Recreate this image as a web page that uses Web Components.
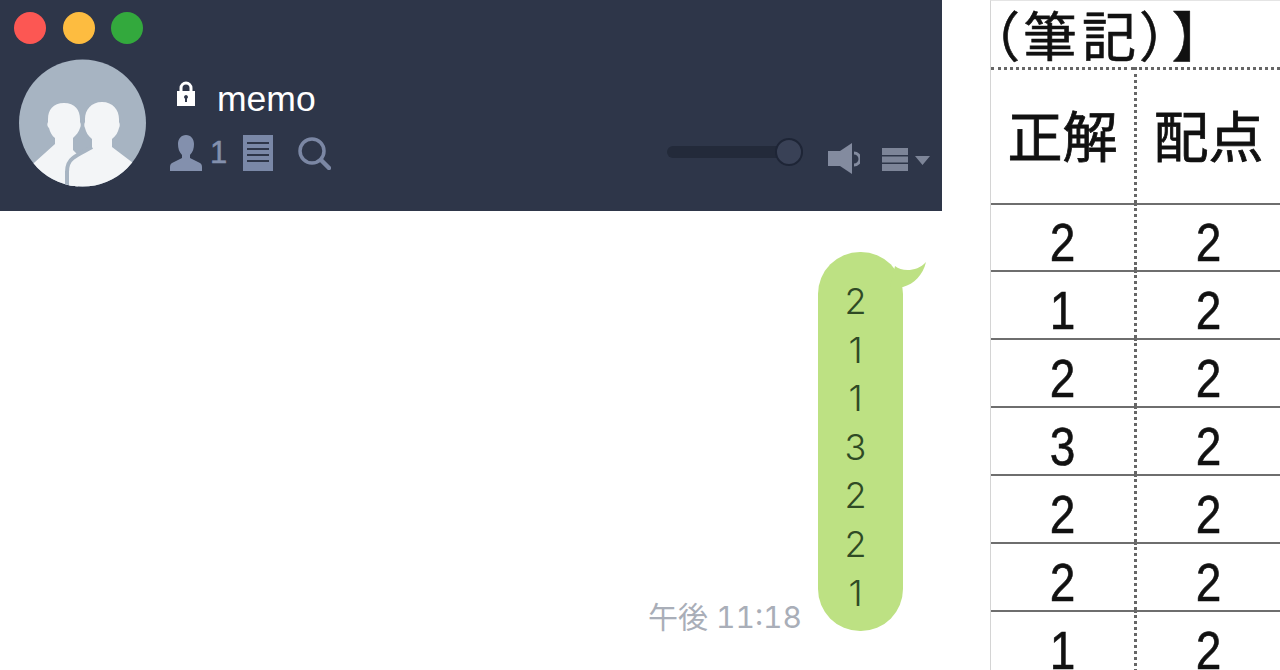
<!DOCTYPE html>
<html lang="ja">
<head>
<meta charset="utf-8">
<title>memo</title>
<style>
  html, body { margin: 0; height: 100%; background: #fff; overflow: hidden; }
  body { font-family: "Liberation Sans", "Noto Sans CJK JP", sans-serif; }
  #page { display: grid; grid-template-columns: 942px 290px; column-gap: 48px; height: 670px; }
  #chat { display: flex; flex-direction: column; height: 670px; }
</style>
</head>
<body>
<div id="page">
  <div id="chat">
    <chat-header title="memo" count="1"></chat-header>
    <chat-log>
      <chat-bubble time="午後 11:18">2<br>1<br>1<br>3<br>2<br>2<br>1</chat-bubble>
    </chat-log>
  </div>
  <answer-sheet></answer-sheet>
</div>

<script>
class WindowLights extends HTMLElement {
	constructor() {
		super()
		this.attachShadow({ mode: 'open' })
		this.shadowRoot.innerHTML = /* html */ `
      <style>
        :host { display: flex; gap: 16.500px; }
        i { display: block; width: 32px; height: 32px; border-radius: 50%; }
      </style>
      <i style="background:#fc5753"></i>
      <i style="background:#fdbc40"></i>
      <i style="background:#33a93d"></i>
    `
	}
}

class ChatHeader extends HTMLElement {
	constructor() {
		super()
		this.attachShadow({ mode: 'open' })
	}

	connectedCallback() {
		this.shadowRoot.innerHTML = /* html */ `
      <style>
        :host {
          display: block;
          flex: none;
          box-sizing: border-box;
          height: 211px;
          padding: 12px 12px 0 14px;
          background: #2e3649;
          font-family: "Liberation Sans", sans-serif;
        }
        .row { display: flex; margin: 15px 0 0 5px; }
        .avatar { display: block; flex: none; width: 127px; height: 128px; }
        .info { flex: 1; margin-left: 24px; padding-top: 22px; }
        .title { display: flex; align-items: center; height: 36px; color: #fff; font-size: 35.500px; }
        .title svg { margin: -12px 21px 0 6px; }
        .tools { display: flex; align-items: center; margin-top: 18px; height: 36px; color: #8390ad; font-size: 31px; }
        .count { margin: 0 16px 0 8px; -webkit-text-stroke: 0.500px #8390ad; }
        .search { margin-left: 25px; }
        .controls { display: flex; align-items: center; align-self: flex-end; margin-bottom: 12px; }
        .slider { position: relative; width: 136px; height: 12px; margin: 0 25px 14px 0; border-radius: 6px; background: #232a3a; }
        .slider i {
          position: absolute; right: 0; top: -8px;
          box-sizing: border-box; width: 28px; height: 28px;
          border: 2px solid #1e2536; border-radius: 50%; background: #394156;
        }
        .menu { margin-left: 22px; }
      </style>
      <window-lights></window-lights>
      <div class="row">
        <svg class="avatar" viewBox="19 59 127 128">
          <defs><clipPath id="c"><circle cx="82.5" cy="123" r="63.5"/></clipPath></defs>
          <circle cx="82.5" cy="123" r="63.5" fill="#a7b4c2"/>
          <g clip-path="url(#c)" fill="#f3f5f7">
            <path d="M64 103C53 103 48 110 48 119V122C47 124 47 126 49 128 50 132 52 136 55 138V144L25 171V192H78V155L73 150V138C76 135 79 132 80 128 81 126 81 124 80 122V119C80 110 75 103 64 103Z"/>
            <path d="M102 102C91 102 85 110 85 119V122C84 124 84 126 85 128 86 132 88 136 92 139V147C85 151 78 154 73 158 69 161 67 166 67 172V192H145V172L112 147V139C116 136 118 132 119 128 120 126 120 124 119 122V119C119 110 113 102 102 102Z"/>
            <path d="M92 147C85 151 78 154 73 158 69 161 67 166 67 172V192" fill="none" stroke="#a7b4c2" stroke-width="4"/>
          </g>
        </svg>
        <div class="info">
          <div class="title">
            <svg width="20" height="25" viewBox="0 0 20 25"><path d="M5 11V7a5 5 0 0 1 10 0v4" fill="none" stroke="#fff" stroke-width="3"/><path fill="#fff" fill-rule="evenodd" d="M1 10h18v15H1zM10 14a2 2 0 0 0-1 3.700V21h2v-3.300A2 2 0 0 0 10 14z"/></svg>
            <span>${this.getAttribute('title')}</span>
          </div>
          <div class="tools">
            <svg width="32" height="36" viewBox="0 0 32 36" fill="#8390ad"><path d="M16 0c-5 0-8 4-8 9 0 4 1 8 4 11v3L2 28c-2 1-2 3-2 5v3h32v-3c0-2 0-4-2-5l-10-5v-3c3-3 4-7 4-11 0-5-3-9-8-9z"/></svg>
            <span class="count">${this.getAttribute('count')}</span>
            <svg width="30" height="36" viewBox="0 0 30 36"><rect width="30" height="36" fill="#7a88a7"/><path d="M4 8h22M4 14h22M4 20h22M4 26h22" stroke="#2e3649" stroke-width="2"/></svg>
            <svg class="search" width="33" height="33" viewBox="0 0 33 33" fill="none" stroke="#7b87a4" stroke-width="3.500"><circle cx="14" cy="14" r="12"/><path d="M23 23l8 8" stroke-linecap="round" stroke-width="4.500"/></svg>
          </div>
        </div>
        <div class="controls">
          <div class="slider"><i></i></div>
          <svg width="32" height="32" viewBox="0 0 32 32" fill="#838b9f"><path d="M0 8h12L24 0v31L12 23H0z"/><path d="M26 10a6 6 0 0 1 0 12" fill="none" stroke="#838b9f" stroke-width="3"/></svg>
          <svg class="menu" width="48" height="23" viewBox="0 0 48 23" fill="#7d8598"><path d="M0 0h26v7H0zM0 8.500h26v6H0zM0 16h26v7H0zM33 8h15l-7.500 9z"/></svg>
        </div>
      </div>
    `
	}
}

class ChatLog extends HTMLElement {
	constructor() {
		super()
		this.attachShadow({ mode: 'open' })
		this.shadowRoot.innerHTML = /* html */ `
      <style>
        :host {
          display: flex;
          flex: 1;
          justify-content: flex-end;
          align-items: flex-start;
          box-sizing: border-box;
          padding: 41px 39px 0 0;
        }
      </style>
      <slot></slot>
    `
	}
}

class ChatBubble extends HTMLElement {
	constructor() {
		super()
		this.attachShadow({ mode: 'open' })
	}

	connectedCallback() {
		this.shadowRoot.innerHTML = /* html */ `
      <style>
        :host { display: flex; align-items: flex-end; }
        .time {
          margin: 0 16px -8px 0;
          color: #a9aeb8;
          font: 400 30px/44px Inter, "Noto Sans CJK JP", sans-serif;
          font-variant-numeric: tabular-nums;
          white-space: nowrap;
        }
        .bubble {
          position: relative;
          box-sizing: border-box;
          width: 85px;
          height: 379px;
          padding: 25px 10px 0 0;
          border-radius: 42px;
          background: #bde183;
          color: #2f4a25;
          font: 300 36px/48.600px Inter, sans-serif;
          text-align: center;
        }
        svg { position: absolute; left: 72px; top: -1px; }
      </style>
      <div class="time">${this.getAttribute('time')}</div>
      <div class="bubble">
        <svg width="38" height="38" viewBox="0 0 38 38"><path d="M5 15C12 21 27 21 36 11 33 24 24 33 13 36H0z" fill="#bde183"/></svg>
        <slot></slot>
      </div>
    `
	}
}

class AnswerSheet extends HTMLElement {
	constructor() {
		super()
		this.attachShadow({ mode: 'open' })
	}

	connectedCallback() {
		const answers = [2, 1, 2, 3, 2, 2, 1]
		this.shadowRoot.innerHTML = /* html */ `
      <style>
        :host {
          display: block;
          box-sizing: border-box;
          height: 670px;
          overflow: hidden;
          border-left: 1px solid #d4d4d4;
          border-top: 1px solid #e4e4e4;
          color: #111;
          font-family: "Noto Sans CJK JP", sans-serif;
        }
        h1 {
          box-sizing: border-box;
          height: 66px;
          margin: 0;
          padding-left: 0;
          font: 400 54px/66px "Noto Sans CJK JP", sans-serif;
          font-feature-settings: "palt";
          letter-spacing: 5px;
          -webkit-text-stroke: 0.600px #111;
          white-space: nowrap;
        }
        .table { display: grid; grid-template-columns: 143px 1fr; grid-template-rows: 68px 68px 67px; grid-auto-rows: 68px; }
        .cell {
          display: flex;
          align-items: center;
          justify-content: center;
          box-sizing: border-box;
          border-top: 2px solid #6e6e6e;
        }
        .cell:nth-child(even) { border-left: 3px dotted #666; }
        .head { grid-row: span 2; border-top: 3px dotted #666; font-size: 55px; font-weight: 400; -webkit-text-stroke: 0.800px #111; line-height: 1; padding-bottom: 6px; }
        .num { padding-top: 9px; }
        .num span { display: block; font: 46px/1 "Liberation Sans", sans-serif; transform: scaleY(1.180); -webkit-text-stroke: 0.500px #111; }
      </style>
      <h1>（筆記）】</h1>
      <div class="table">
        <div class="cell head">正解</div>
        <div class="cell head">配点</div>
        ${answers.map(a => `<div class="cell num"><span>${a}</span></div><div class="cell num"><span>2</span></div>`).join('')}
      </div>
    `
	}
}

customElements.define('window-lights', WindowLights)
customElements.define('chat-header', ChatHeader)
customElements.define('chat-log', ChatLog)
customElements.define('chat-bubble', ChatBubble)
customElements.define('answer-sheet', AnswerSheet)
</script>
</body>
</html>
